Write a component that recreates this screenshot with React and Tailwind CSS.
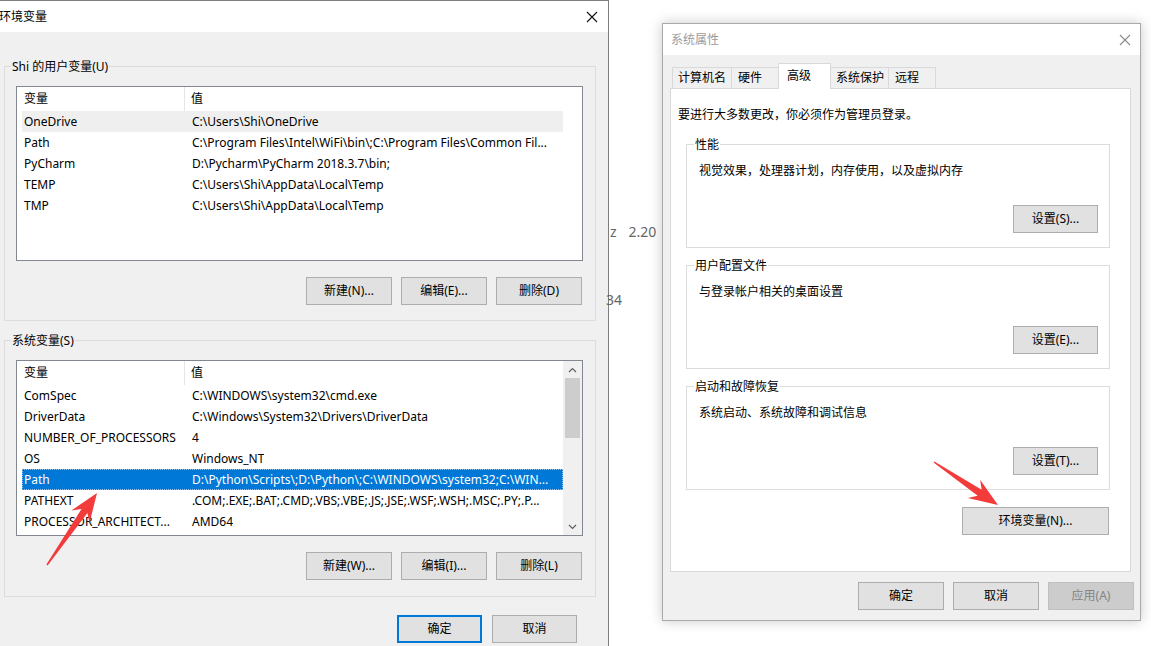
import React from "react";

const userVars = [
  ["OneDrive", "C:\\Users\\Shi\\OneDrive"],
  ["Path", "C:\\Program Files\\Intel\\WiFi\\bin\\;C:\\Program Files\\Common Fil..."],
  ["PyCharm", "D:\\Pycharm\\PyCharm 2018.3.7\\bin;"],
  ["TEMP", "C:\\Users\\Shi\\AppData\\Local\\Temp"],
  ["TMP", "C:\\Users\\Shi\\AppData\\Local\\Temp"],
];

const sysVars = [
  ["ComSpec", "C:\\WINDOWS\\system32\\cmd.exe"],
  ["DriverData", "C:\\Windows\\System32\\Drivers\\DriverData"],
  ["NUMBER_OF_PROCESSORS", "4"],
  ["OS", "Windows_NT"],
  ["Path", "D:\\Python\\Scripts\\;D:\\Python\\;C:\\WINDOWS\\system32;C:\\WIN..."],
  ["PATHEXT", ".COM;.EXE;.BAT;.CMD;.VBS;.VBE;.JS;.JSE;.WSF;.WSH;.MSC;.PY;.P..."],
  ["PROCESSOR_ARCHITECT...", "AMD64"],
];

function Btn({ children, className = "" }) {
  return (
    <div
      className={`flex h-[28px] items-center justify-center border border-[#adadad] bg-[#e1e1e1] text-[12px] leading-none ${className}`}
    >
      {children}
    </div>
  );
}

function CloseX({ color }) {
  return (
    <svg width="12" height="12" viewBox="0 0 12 12">
      <path d="M1 1 L11 11 M11 1 L1 11" stroke={color} strokeWidth="1.1" />
    </svg>
  );
}

function Chevron({ up }) {
  return (
    <svg width="9" height="6" viewBox="0 0 9 6">
      <path
        d={up ? "M1 5 L4.5 1.5 L8 5" : "M1 1 L4.5 4.5 L8 1"}
        fill="none"
        stroke="#606060"
        strokeWidth="1.2"
      />
    </svg>
  );
}

function VarList({ rows, selected, hover, scroll, height }) {
  return (
    <div className={`relative flex w-[567px] border border-[#828790] bg-white ${height}`}>
      <div className="w-[546px]">
        {/* header */}
        <div className="flex h-[24px] items-center">
          <div className="flex h-full w-[168px] items-center border-r border-[#e5e5e5] pl-[7px]">变量</div>
          <div className="pl-[6px]">值</div>
        </div>
        {rows.map(([name, value], i) => (
          <div
            key={i}
            className={`ml-[5px] flex h-[21px] w-[541px] items-center whitespace-nowrap ${
              i === selected
                ? "bg-[#0078d7] text-white outline-1 outline-dotted outline-[#9cc8ef] -outline-offset-1"
                : i === hover
                ? "bg-[#efefef]"
                : ""
            }`}
          >
            <div className="w-[168px] overflow-hidden pl-[2px]">{name}</div>
            <div className="overflow-hidden pl-[2px]">{value}</div>
          </div>
        ))}
      </div>
      {scroll && (
        <div className="flex w-[19px] flex-col items-center bg-[#f0f0f0]">
          <div className="flex h-[17px] w-full items-center justify-center">
            <Chevron up />
          </div>
          <div className="h-[60px] w-[15px] bg-[#cdcdcd]" />
          <div className="flex-1" />
          <div className="flex h-[17px] w-full items-center justify-center">
            <Chevron />
          </div>
        </div>
      )}
    </div>
  );
}

function LeftGroup({ label, children }) {
  return (
    <fieldset className="border border-[#dcdcdc] pl-[11px] pr-[12px]">
      <legend className="-ml-[5px] px-[1px] text-[12px] leading-[17px]">{label}</legend>
      {children}
    </fieldset>
  );
}

function RightGroup({ label, text, button }) {
  return (
    <fieldset className="w-[424px] border border-[#dcdcdc] pl-[12px] pr-[11px] pb-[14px]">
      <legend className="-ml-[5px] px-[1px] text-[12px] leading-[17px]">{label}</legend>
      <div className="mt-[9px] leading-[17px]">{text}</div>
      <div className="mt-[26px] flex justify-end">
        <Btn className="w-[85px]">{button}</Btn>
      </div>
    </fieldset>
  );
}

function arrowPoints(tx, ty, hx, hy) {
  const dx = hx - tx;
  const dy = hy - ty;
  const L = Math.hypot(dx, dy);
  const ux = dx / L;
  const uy = dy / L;
  const nx = -uy;
  const ny = ux;
  const p = (a, b) => `${(hx - ux * a + nx * b).toFixed(1)},${(hy - uy * a + ny * b).toFixed(1)}`;
  return [p(0, 0), p(29, 11), p(22, 3.6), p(L, 0.7), p(L, -0.7), p(22, -3.6), p(29, -11)].join(" ");
}

export default function App() {
  return (
    <div className="relative flex h-[646px] w-[1151px] overflow-hidden bg-white font-['Noto_Sans','Noto_Sans_CJK_SC',sans-serif] text-[12px] text-black">
      {/* Environment variables window */}
      <div className="flex h-full w-[609px] shrink-0 flex-col border-r border-t border-[#7d7d7d] bg-[#f0f0f0]">
        <div className="flex h-[31px] shrink-0 items-center justify-between bg-white pr-[10px]">
          <span className="-ml-[1px] text-[12px]">环境变量</span>
          <CloseX color="#111" />
        </div>
        <div className="flex flex-col pl-[4px] pr-[12px] pt-[26px]">
          <LeftGroup label="Shi 的用户变量(U)">
            <div className="mt-[11px]">
              <VarList rows={userVars} hover={0} height="h-[175px]" />
            </div>
            <div className="mt-[16px] flex justify-end gap-[9px] pb-[15px] pr-[1px]">
              <Btn className="w-[86px]">新建(N)...</Btn>
              <Btn className="w-[86px]">编辑(E)...</Btn>
              <Btn className="w-[86px]">删除(D)</Btn>
            </div>
          </LeftGroup>
          <div className="mt-[11px]">
            <LeftGroup label="系统变量(S)">
              <div className="mt-[11px]">
                <VarList rows={sysVars} selected={4} scroll height="h-[176px]" />
              </div>
              <div className="mt-[16px] flex justify-end gap-[9px] pb-[16px] pr-[1px]">
                <Btn className="w-[86px]">新建(W)...</Btn>
                <Btn className="w-[86px]">编辑(I)...</Btn>
                <Btn className="w-[86px]">删除(L)</Btn>
              </div>
            </LeftGroup>
          </div>
          <div className="mt-[18px] flex justify-end gap-[10px] pr-[19px]">
            <div className="flex h-[28px] w-[85px] items-center justify-center border-2 border-[#0078d7] bg-[#e1e1e1]">确定</div>
            <Btn className="w-[85px]">取消</Btn>
          </div>
        </div>
      </div>

      {/* background app peeking through */}
      <div className="flex w-[53px] shrink-0 flex-col pt-[222px] text-[14px] text-[#666]">
        <div className="flex leading-[20px]">
          <span className="ml-[1px]">z</span>
          <span className="ml-[12px]">2.20</span>
        </div>
        <div className="-ml-[3px] mt-[48px] leading-[20px]">34</div>
      </div>

      {/* System properties window */}
      <div className="shrink-0 pt-[23px]">
        <div className="flex h-[598px] w-[479px] flex-col border border-[#a9a9a9] bg-[#f0f0f0] shadow-[0_0_12px_rgba(0,0,0,0.22)]">
          <div className="flex h-[31px] shrink-0 items-center justify-between bg-white pl-[8px] pr-[9px]">
            <span className="text-[#9b9b9b]">系统属性</span>
            <CloseX color="#8a8a8a" />
          </div>
          <div className="flex flex-1 flex-col pl-[7px] pr-[9px] pt-[8px]">
            {/* tabs */}
            <div className="relative z-10 flex h-[25px] items-end pl-[2px]">
              <div className="flex h-[21px] w-[60px] items-center border border-b-0 border-[#d9d9d9] pl-[5px]">计算机名</div>
              <div className="-ml-px flex h-[21px] w-[48px] items-center border border-b-0 border-[#d9d9d9] pl-[6px]">硬件</div>
              <div className="-ml-px -mb-px flex h-[26px] w-[53px] items-start border border-b-0 border-[#d9d9d9] bg-white pl-[8px] pt-[3px]">高级</div>
              <div className="-ml-px flex h-[21px] w-[59px] items-center border border-b-0 border-[#d9d9d9] pl-[5px]">系统保护</div>
              <div className="-ml-px flex h-[21px] w-[48px] items-center border border-b-0 border-[#d9d9d9] pl-[6px]">远程</div>
            </div>
            {/* panel */}
            <div className="flex h-[484px] w-[461px] flex-col border border-[#d9d9d9] bg-white pl-[15px] pt-[17px]">
              <div className="-ml-[8px] leading-[17px]">要进行大多数更改，你必须作为管理员登录。</div>
              <div className="mt-[13px] flex flex-col gap-[9px]">
                <RightGroup label="性能" text="视觉效果，处理器计划，内存使用，以及虚拟内存" button="设置(S)..." />
                <RightGroup label="用户配置文件" text="与登录帐户相关的桌面设置" button="设置(E)..." />
                <RightGroup label="启动和故障恢复" text="系统启动、系统故障和调试信息" button="设置(T)..." />
              </div>
              <div className="mt-[17px] flex w-[423px] justify-end">
                <Btn className="w-[147px]">环境变量(N)...</Btn>
              </div>
            </div>
            <div className="mt-[10px] flex justify-end gap-[9px]">
              <Btn className="w-[86px]">确定</Btn>
              <Btn className="w-[86px]">取消</Btn>
              <div className="-mr-[3px] flex h-[28px] w-[86px] items-center justify-center border border-[#bfbfbf] bg-[#cccccc] text-[#848484]">应用(A)</div>
            </div>
          </div>
        </div>
      </div>

      {/* red annotation arrows */}
      <svg className="pointer-events-none absolute inset-0" width="1151" height="646">
        <polygon points={arrowPoints(47, 565, 97, 493)} fill="#f23b3b" />
        <polygon points={arrowPoints(934, 462, 998, 505)} fill="#f23b3b" />
      </svg>
    </div>
  );
}
